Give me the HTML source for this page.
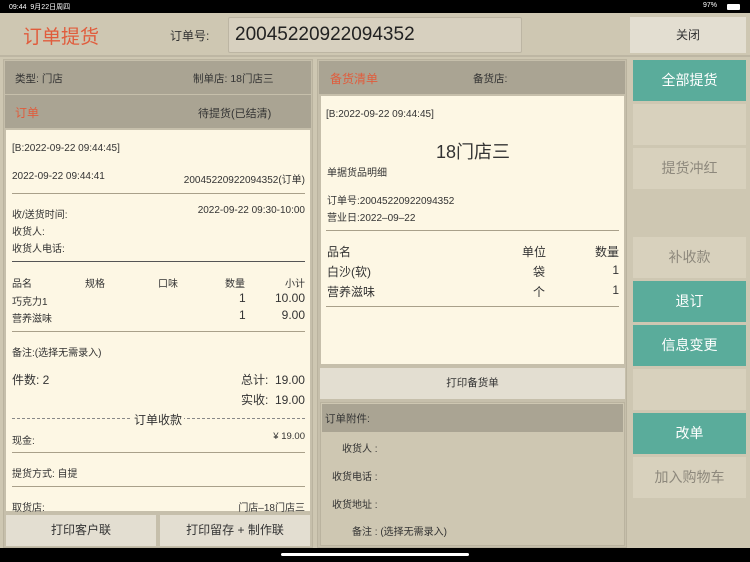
<!DOCTYPE html>
<html><head><meta charset="utf-8"><style>
*{margin:0;padding:0;box-sizing:border-box}
body{width:750px;height:562px;background:#cec7b2;font-family:"Liberation Sans","Noto Sans CJK SC",sans-serif;color:#333;position:relative;overflow:hidden;font-size:10px}
.a{position:absolute;white-space:nowrap}
.hd{background:#aaa493}
.paper{background:#fdf7e4}
.btn{position:absolute;background:#e3ded1;text-align:center;font-size:12px;color:#333}
.rb{position:absolute;left:633px;width:113px;height:41px;background:#d8d1bd;text-align:center;line-height:41px;font-size:14px;color:#8d887c}
.rb.t{background:#5aac9b;color:#fff}
.hr{position:absolute;height:1px;background:#a9a08a}
.s{font-size:10px}
</style></head><body>
<div class="a" style="left:0;top:0;width:750px;height:13px;background:#000"></div>
<div class="a" style="left:9px;top:2px;color:#fff;font-size:7px">09:44&nbsp;&nbsp;9月22日周四</div>
<div class="a" style="left:703px;top:2px;color:#fff;font-size:7px">97%</div>
<div class="a" style="left:727px;top:4px;width:13px;height:6px;background:#fff;border-radius:1px"></div>
<div class="a" style="left:0;top:548px;width:750px;height:14px;background:#000"></div>
<div class="a" style="left:281px;top:553px;width:188px;height:3px;background:#fff;border-radius:2px"></div>

<div class="a" style="left:23px;top:22px;font-size:19px;color:#e05c3c">订单提货</div>
<div class="a" style="left:170px;top:27px;font-size:12px">订单号:</div>
<div class="a" style="left:228px;top:17px;width:294px;height:36px;background:#d7d0bf;border:1px solid #bcb5a3;border-radius:2px;font-size:19px;line-height:34px;padding-left:6px;color:#222">20045220922094352</div>
<div class="btn" style="left:630px;top:17px;width:116px;height:36px;line-height:36px">关闭</div>
<div class="a" style="left:0;top:55px;width:750px;height:2px;background:#bdb6a3"></div>

<!-- left panel -->
<div class="a" style="left:3px;top:59px;width:310px;height:489px;background:#c6bfab;border:1px solid #bab39f"></div>
<div class="a hd" style="left:5px;top:61px;width:306px;height:33px"></div>
<div class="a hd" style="left:5px;top:95px;width:306px;height:33px"></div>
<div class="a" style="left:15px;top:71px;font-size:10.5px">类型: 门店</div>
<div class="a" style="left:193px;top:71px;font-size:10.5px">制单店: 18门店三</div>
<div class="a" style="left:15px;top:104px;font-size:12px;color:#e05c3c">订单</div>
<div class="a" style="left:198px;top:105px;font-size:11px">待提货(已结清)</div>
<div class="a paper" style="left:6px;top:130px;width:304px;height:381px"></div>
<div class="a s" style="left:12px;top:143px">[B:2022-09-22 09:44:45]</div>
<div class="a s" style="left:12px;top:171px">2022-09-22 09:44:41</div>
<div class="a s" style="right:445px;top:171px">20045220922094352(订单)</div>
<div class="hr" style="left:12px;top:193px;width:293px"></div>
<div class="a s" style="left:12px;top:206px">收/送货时间:</div>
<div class="a s" style="right:445px;top:205px">2022-09-22 09:30-10:00</div>
<div class="a s" style="left:12px;top:223px">收货人:</div>
<div class="a s" style="left:12px;top:240px">收货人电话:</div>
<div class="hr" style="left:12px;top:261px;width:293px;background:#555"></div>
<div class="a s" style="left:12px;top:275px">品名</div>
<div class="a s" style="left:85px;top:275px">规格</div>
<div class="a s" style="left:158px;top:275px">口味</div>
<div class="a s" style="left:225px;top:275px">数量</div>
<div class="a s" style="right:445px;top:275px">小计</div>
<div class="a s" style="left:12px;top:293px">巧克力1</div>
<div class="a" style="left:239px;top:291px;font-size:12px">1</div>
<div class="a" style="right:445px;top:291px;font-size:12px">10.00</div>
<div class="a s" style="left:12px;top:310px">营养滋味</div>
<div class="a" style="left:239px;top:308px;font-size:12px">1</div>
<div class="a" style="right:445px;top:308px;font-size:12px">9.00</div>
<div class="hr" style="left:12px;top:331px;width:293px"></div>
<div class="a s" style="left:12px;top:344px">备注:(选择无需录入)</div>
<div class="a" style="left:12px;top:371px;font-size:12px">件数: 2</div>
<div class="a" style="right:445px;top:371px;font-size:12px">总计:&nbsp;&nbsp;19.00</div>
<div class="a" style="right:445px;top:391px;font-size:12px">实收:&nbsp;&nbsp;19.00</div>
<div class="a" style="left:12px;top:418px;width:293px;border-top:1px dashed #888"></div>
<div class="a" style="left:132px;top:411px;font-size:12px;background:#fdf7e4;padding:0 2px">订单收款</div>
<div class="a s" style="left:12px;top:432px">现金:</div>
<div class="a" style="right:445px;top:431px;font-size:9.5px">¥ 19.00</div>
<div class="hr" style="left:12px;top:452px;width:293px"></div>
<div class="a s" style="left:12px;top:465px">提货方式: 自提</div>
<div class="hr" style="left:12px;top:486px;width:293px"></div>
<div class="a s" style="left:12px;top:499px">取货店:</div>
<div class="a s" style="right:445px;top:499px">门店–18门店三</div>
<div class="btn" style="left:6px;top:515px;width:150px;height:31px;line-height:31px">打印客户联</div>
<div class="btn" style="left:160px;top:515px;width:150px;height:31px;line-height:31px">打印留存 + 制作联</div>

<!-- middle panel -->
<div class="a" style="left:317px;top:59px;width:310px;height:489px;background:#c6bfab;border:1px solid #bab39f"></div>
<div class="a hd" style="left:319px;top:61px;width:306px;height:33px"></div>
<div class="a" style="left:330px;top:70px;font-size:12px;color:#e05c3c">备货清单</div>
<div class="a" style="left:473px;top:71px;font-size:10.5px">备货店:</div>
<div class="a paper" style="left:321px;top:96px;width:303px;height:268px"></div>
<div class="a s" style="left:326px;top:109px">[B:2022-09-22 09:44:45]</div>
<div class="a" style="left:436px;top:138px;font-size:18px">18门店三</div>
<div class="a s" style="left:327px;top:164px">单据货品明细</div>
<div class="a s" style="left:327px;top:192px">订单号:20045220922094352</div>
<div class="a s" style="left:327px;top:209px">营业日:2022–09–22</div>
<div class="hr" style="left:326px;top:230px;width:293px"></div>
<div class="a" style="left:327px;top:243px;font-size:12px">品名</div>
<div class="a" style="left:522px;top:243px;font-size:12px">单位</div>
<div class="a" style="right:131px;top:243px;font-size:12px">数量</div>
<div class="a" style="left:327px;top:263px;font-size:12px">白沙(软)</div>
<div class="a" style="left:533px;top:263px;font-size:12px">袋</div>
<div class="a" style="right:131px;top:263px;font-size:12px">1</div>
<div class="a" style="left:327px;top:283px;font-size:12px">营养滋味</div>
<div class="a" style="left:533px;top:283px;font-size:12px">个</div>
<div class="a" style="right:131px;top:283px;font-size:12px">1</div>
<div class="hr" style="left:326px;top:306px;width:293px"></div>
<div class="btn" style="left:320px;top:368px;width:305px;height:31px;line-height:31px;font-size:10.5px">打印备货单</div>
<div class="a" style="left:320px;top:402px;width:305px;height:144px;border:1px solid #bab39f;background:#cec7b2"></div>
<div class="a hd" style="left:322px;top:404px;width:301px;height:28px"></div>
<div class="a" style="left:325px;top:411px;font-size:10.5px">订单附件:</div>
<div class="a s" style="left:342px;top:440px">收货人 :</div>
<div class="a s" style="left:332px;top:468px">收货电话 :</div>
<div class="a s" style="left:332px;top:496px">收货地址 :</div>
<div class="a s" style="left:352px;top:523px">备注 : (选择无需录入)</div>

<!-- right buttons -->
<div class="rb t" style="top:60px">全部提货</div>
<div class="rb" style="top:104px"></div>
<div class="rb" style="top:148px">提货冲红</div>
<div class="rb" style="top:237px">补收款</div>
<div class="rb t" style="top:281px">退订</div>
<div class="rb t" style="top:325px">信息变更</div>
<div class="rb" style="top:369px"></div>
<div class="rb t" style="top:413px">改单</div>
<div class="rb" style="top:457px">加入购物车</div>
</body></html>
